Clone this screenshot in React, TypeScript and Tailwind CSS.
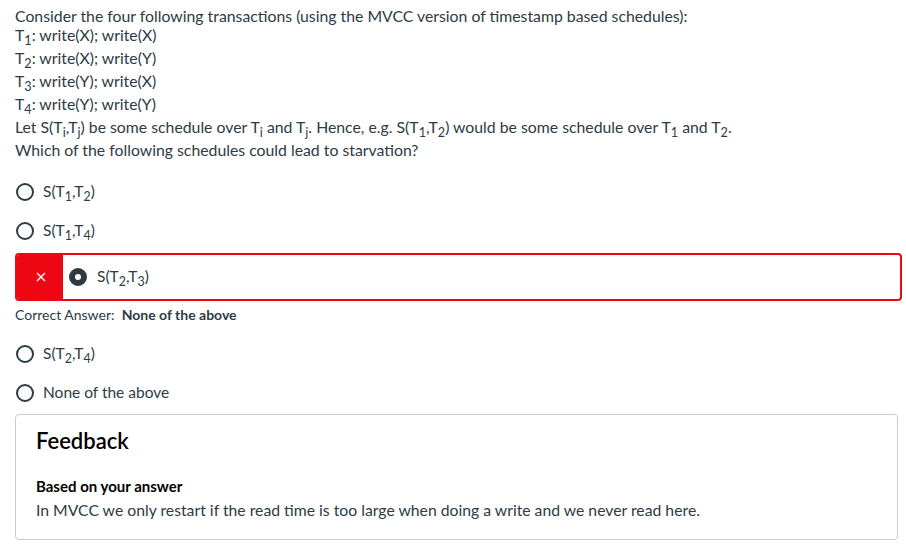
import React from "react"

const ink = "text-[#2d3b45]"

function Sub({ children }: { children: React.ReactNode }) {
  return <sub className="text-[0.8em] -bottom-[0.3em]">{children}</sub>
}

function Radio({ checked = false }: { checked?: boolean }) {
  return checked ? (
    <span className="box-border inline-block h-[18px] w-[18px] shrink-0 rounded-full border-[6px] border-[#2d3b45] bg-white" />
  ) : (
    <span className="box-border inline-block h-[18px] w-[18px] shrink-0 rounded-full border-[2.5px] border-[#2d3b45] bg-white" />
  )
}

function Option({ children }: { children: React.ReactNode }) {
  return (
    <div className="flex h-[39px] items-center gap-[9px] pl-[16px]">
      <Radio />
      <span className="text-[15.5px]">{children}</span>
    </div>
  )
}

export default function App() {
  return (
    <div
      className={`h-[553px] w-[906px] bg-white px-[15px] pt-[6px] ${ink}`}
      style={{ fontFamily: "Lato, 'Noto Sans', sans-serif" }}>
      <div className="text-[15.8px]">
        <div className="h-[17px] leading-[19px]">
          Consider the four following transactions (using the MVCC version of timestamp based schedules):
        </div>
        <div className="h-[23px] leading-[23px]">
          T<Sub>1</Sub>: write(X); write(X)
        </div>
        <div className="h-[23px] leading-[23px]">
          T<Sub>2</Sub>: write(X); write(Y)
        </div>
        <div className="h-[23px] leading-[23px]">
          T<Sub>3</Sub>: write(Y); write(X)
        </div>
        <div className="h-[23px] leading-[23px]">
          T<Sub>4</Sub>: write(Y); write(Y)
        </div>
        <div className="h-[23px] leading-[23px]">
          Let S(T<Sub>i</Sub>,T<Sub>j</Sub>) be some schedule over T<Sub>i</Sub> and T
          <Sub>j</Sub>. Hence, e.g. S(T<Sub>1</Sub>,T<Sub>2</Sub>) would be some schedule over T
          <Sub>1</Sub> and T<Sub>2</Sub>.
        </div>
        <div className="h-[23px] leading-[23px]">Which of the following schedules could lead to starvation?</div>
      </div>

      <div className="mt-[11px] -ml-[15px]">
        <Option>
          S(T<Sub>1</Sub>,T<Sub>2</Sub>)
        </Option>
        <Option>
          S(T<Sub>1</Sub>,T<Sub>4</Sub>)
        </Option>
      </div>

      <div className="mt-[3px] flex h-[48px] w-[887px] overflow-hidden rounded-[4px] border-2 border-[#ee0612]">
        <div className="flex w-[46px] items-center justify-center bg-[#ee0612]">
          <svg width="10" height="10" viewBox="0 0 10 10" className="ml-[2px]">
            <path d="M1 1 L9 9 M9 1 L1 9" stroke="white" strokeWidth="1.4" />
          </svg>
        </div>
        <div className="flex items-center gap-[10px] pl-[6px]">
          <Radio checked />
          <span className="text-[15.5px]">
            S(T<Sub>2</Sub>,T<Sub>3</Sub>)
          </span>
        </div>
      </div>

      <div className="mt-[5px] text-[14px] leading-[18px]">
        Correct Answer:&nbsp; <span className="font-bold">None of the above</span>
      </div>

      <div className="-ml-[15px] mt-[10px]">
        <Option>
          S(T<Sub>2</Sub>,T<Sub>4</Sub>)
        </Option>
        <Option>None of the above</Option>
      </div>

      <div className="mt-[2px] h-[126px] w-[883px] rounded-[4px] border border-[#c7cdd1] px-[20px] pt-[12px]">
        <div className="text-[22px] leading-[28px] font-semibold text-black">Feedback</div>
        <div className="mt-[21px] text-[15px] leading-[20px] font-bold text-black">Based on your answer</div>
        <div className="mt-[4px] text-[15.75px] leading-[20px]">
          In MVCC we only restart if the read time is too large when doing a write and we never read here.
        </div>
      </div>
    </div>
  )
}
